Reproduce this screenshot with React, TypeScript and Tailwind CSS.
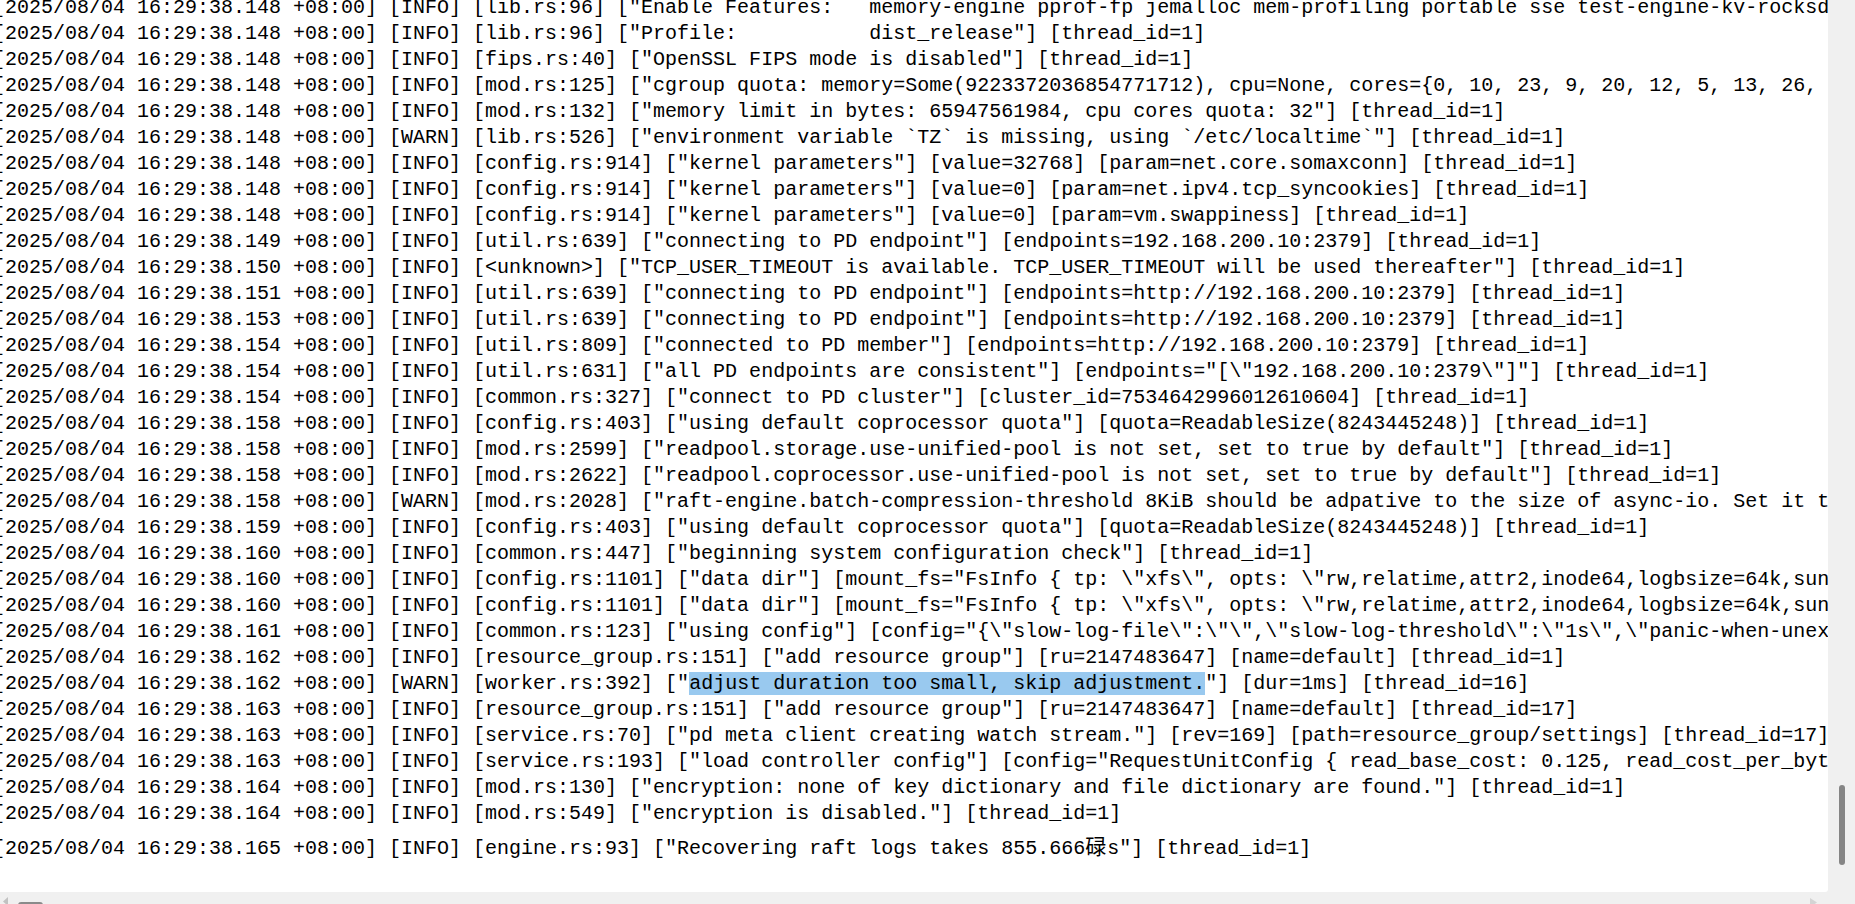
const head = (ms: string, level: string) => `[2025/08/04 16:29:38.${ms} +08:00] [${level}] `;

// log lines as they sit in the editor (long ones run off the right edge)
const lines: string[] = [
  head('148', 'INFO') + '[lib.rs:96] ["Enable Features:   memory-engine pprof-fp jemalloc mem-profiling portable sse test-engine-kv-rocksdb test-engine-raft-raft-engine trace-async-tasks openssl-vendored"] [thread_id=1]',
  head('148', 'INFO') + '[lib.rs:96] ["Profile:           dist_release"] [thread_id=1]',
  head('148', 'INFO') + '[fips.rs:40] ["OpenSSL FIPS mode is disabled"] [thread_id=1]',
  head('148', 'INFO') + '[mod.rs:125] ["cgroup quota: memory=Some(9223372036854771712), cpu=None, cores={0, 10, 23, 9, 20, 12, 5, 13, 26, 17, 31, 1, 4, 14, 27, 29, 22, 19, 6, 28}"] [thread_id=1]',
  head('148', 'INFO') + '[mod.rs:132] ["memory limit in bytes: 65947561984, cpu cores quota: 32"] [thread_id=1]',
  head('148', 'WARN') + '[lib.rs:526] ["environment variable `TZ` is missing, using `/etc/localtime`"] [thread_id=1]',
  head('148', 'INFO') + '[config.rs:914] ["kernel parameters"] [value=32768] [param=net.core.somaxconn] [thread_id=1]',
  head('148', 'INFO') + '[config.rs:914] ["kernel parameters"] [value=0] [param=net.ipv4.tcp_syncookies] [thread_id=1]',
  head('148', 'INFO') + '[config.rs:914] ["kernel parameters"] [value=0] [param=vm.swappiness] [thread_id=1]',
  head('149', 'INFO') + '[util.rs:639] ["connecting to PD endpoint"] [endpoints=192.168.200.10:2379] [thread_id=1]',
  head('150', 'INFO') + '[<unknown>] ["TCP_USER_TIMEOUT is available. TCP_USER_TIMEOUT will be used thereafter"] [thread_id=1]',
  head('151', 'INFO') + '[util.rs:639] ["connecting to PD endpoint"] [endpoints=http://192.168.200.10:2379] [thread_id=1]',
  head('153', 'INFO') + '[util.rs:639] ["connecting to PD endpoint"] [endpoints=http://192.168.200.10:2379] [thread_id=1]',
  head('154', 'INFO') + '[util.rs:809] ["connected to PD member"] [endpoints=http://192.168.200.10:2379] [thread_id=1]',
  head('154', 'INFO') + '[util.rs:631] ["all PD endpoints are consistent"] [endpoints="[\\"192.168.200.10:2379\\"]"] [thread_id=1]',
  head('154', 'INFO') + '[common.rs:327] ["connect to PD cluster"] [cluster_id=7534642996012610604] [thread_id=1]',
  head('158', 'INFO') + '[config.rs:403] ["using default coprocessor quota"] [quota=ReadableSize(8243445248)] [thread_id=1]',
  head('158', 'INFO') + '[mod.rs:2599] ["readpool.storage.use-unified-pool is not set, set to true by default"] [thread_id=1]',
  head('158', 'INFO') + '[mod.rs:2622] ["readpool.coprocessor.use-unified-pool is not set, set to true by default"] [thread_id=1]',
  head('158', 'WARN') + '[mod.rs:2028] ["raft-engine.batch-compression-threshold 8KiB should be adpative to the size of async-io. Set it to 4KiB."] [thread_id=1]',
  head('159', 'INFO') + '[config.rs:403] ["using default coprocessor quota"] [quota=ReadableSize(8243445248)] [thread_id=1]',
  head('160', 'INFO') + '[common.rs:447] ["beginning system configuration check"] [thread_id=1]',
  head('160', 'INFO') + '[config.rs:1101] ["data dir"] [mount_fs="FsInfo { tp: \\"xfs\\", opts: \\"rw,relatime,attr2,inode64,logbsize=64k,sunit=128,swidth=128,noquota\\", mnt_dir: \\"/data\\" }"] [thread_id=1]',
  head('160', 'INFO') + '[config.rs:1101] ["data dir"] [mount_fs="FsInfo { tp: \\"xfs\\", opts: \\"rw,relatime,attr2,inode64,logbsize=64k,sunit=128,swidth=128,noquota\\", mnt_dir: \\"/data\\" }"] [thread_id=1]',
  head('161', 'INFO') + '[common.rs:123] ["using config"] [config="{\\"slow-log-file\\":\\"\\",\\"slow-log-threshold\\":\\"1s\\",\\"panic-when-unexpected-key-or-data\\":false}"] [thread_id=1]',
  head('162', 'INFO') + '[resource_group.rs:151] ["add resource group"] [ru=2147483647] [name=default] [thread_id=1]',
  '', // worker.rs line, drawn with its selection below
  head('163', 'INFO') + '[resource_group.rs:151] ["add resource group"] [ru=2147483647] [name=default] [thread_id=17]',
  head('163', 'INFO') + '[service.rs:70] ["pd meta client creating watch stream."] [rev=169] [path=resource_group/settings] [thread_id=17]',
  head('163', 'INFO') + '[service.rs:193] ["load controller config"] [config="RequestUnitConfig { read_base_cost: 0.125, read_cost_per_byte: 0.0000152587890625 }"] [thread_id=1]',
  head('164', 'INFO') + '[mod.rs:130] ["encryption: none of key dictionary and file dictionary are found."] [thread_id=1]',
  head('164', 'INFO') + '[mod.rs:549] ["encryption is disabled."] [thread_id=1]',
];

export default function App() {
  return (
    <div className="flex h-[904px] w-[1855px] overflow-hidden bg-[#f0f0f0]">
      <div className="flex min-w-0 flex-1 flex-col">
        <div className="min-h-0 flex-1 overflow-hidden rounded-br-[3px] bg-white">
          <div className="-ml-[7px] -mt-[5px] whitespace-pre font-['Liberation_Mono',monospace] text-[20px] leading-[26px] text-black">
            {lines.map((line, i) =>
              i === 26 ? (
                <div key={i} className="h-[26px]">
                  {head('162', 'WARN')}[worker.rs:392] ["
                  <span className="bg-[#99c9ef]">adjust duration too small, skip adjustment.</span>
                  "] [dur=1ms] [thread_id=16]
                </div>
              ) : (
                <div key={i} className="h-[26px]">{line}</div>
              )
            )}
            <div className="h-[35px] pt-[9px]">
              {head('165', 'INFO')}[engine.rs:93] ["Recovering raft logs takes 855.666
              <span className="inline-block w-[22px] font-['Noto_Sans_CJK_SC',sans-serif] text-[21px] leading-[0]">碌</span>
              s"] [thread_id=1]
            </div>
          </div>
        </div>
        {/* horizontal scrollbar, mostly cut off */}
        <div className="flex h-[12px] shrink-0 items-start">
          <svg width="12" height="12" viewBox="0 0 12 12" className="shrink-0">
            <polygon points="8,5 3,9.5 8,14" fill="#c2c2c2" />
          </svg>
          <div className="ml-[6px] mt-[10px] h-[6px] w-[25px] rounded-[3px] bg-[#8a8a8a]" />
          <div className="flex-1" />
          <svg width="18" height="12" viewBox="0 0 18 12" className="shrink-0">
            <polygon points="0,6 7,10.5 0,15" fill="#d4d4d4" />
          </svg>
        </div>
      </div>
      {/* vertical scrollbar */}
      <div className="flex w-[27px] shrink-0 flex-col items-center pt-[785px]">
        <div className="ml-[1px] h-[80px] w-[6px] rounded-full bg-[#858585]" />
      </div>
    </div>
  );
}
